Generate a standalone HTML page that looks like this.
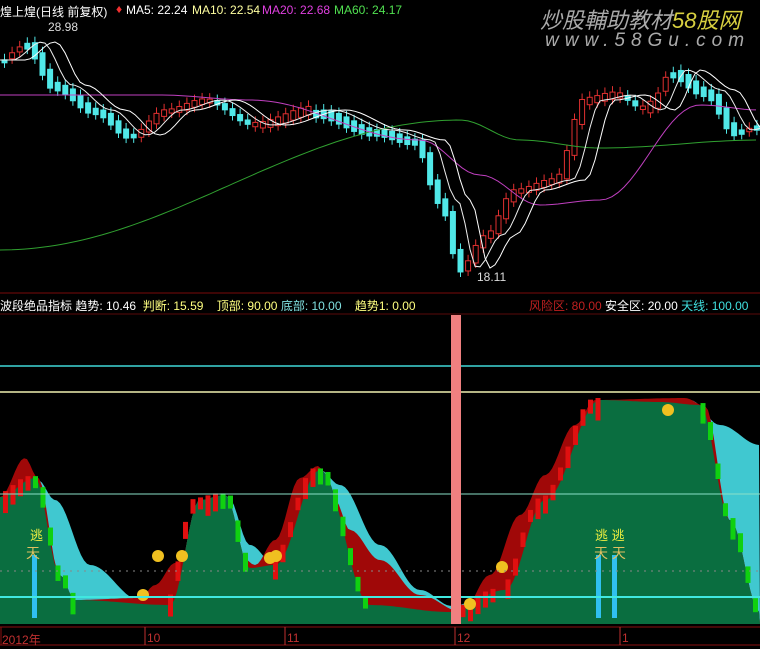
<!DOCTYPE html><html><head><meta charset="utf-8"><style>
body{margin:0;background:#000;width:760px;height:649px;overflow:hidden;font-family:"Liberation Sans","Noto Sans CJK SC",sans-serif}
svg{position:absolute;left:0;top:0}
.t{position:absolute;font-size:12px;white-space:nowrap}
</style></head><body>
<svg id="s" width="760" height="649" xmlns="http://www.w3.org/2000/svg">
<line x1="0" y1="293" x2="760" y2="293" stroke="#7a0a0a"/>
<line x1="0" y1="314" x2="760" y2="314" stroke="#5a0a0a"/>
<line x1="0" y1="366" x2="760" y2="366" stroke="#40d8d8" stroke-width="1.5"/>
<line x1="0" y1="392" x2="760" y2="392" stroke="#f0f0b0" stroke-width="1.5"/>
<g id="low"></g>
<line x1="0" y1="494" x2="760" y2="494" stroke="#8ae0c8" stroke-width="1"/>
<line x1="0" y1="571" x2="760" y2="571" stroke="#888" stroke-dasharray="2 5"/>
<line x1="0" y1="597" x2="760" y2="597" stroke="#40e8e0" stroke-width="2"/>
<rect x="451" y="315" width="10" height="309" fill="#f08080"/>
<line x1="0" y1="627" x2="760" y2="627" stroke="#8a1010"/>
<line x1="0" y1="645" x2="760" y2="645" stroke="#8a1010"/>
<line x1="1" y1="627" x2="1" y2="645" stroke="#8a1010"/>
<g stroke="#c03030"><line x1="145" y1="627" x2="145" y2="645"/><line x1="285" y1="627" x2="285" y2="645"/><line x1="455" y1="627" x2="455" y2="645"/><line x1="620" y1="627" x2="620" y2="645"/></g>
<g id="upper"></g>
</svg>
<div class="t" style="left:0;top:3px;color:#fff">煌上煌(日线 前复权)</div>
<div class="t" style="left:116px;top:2px;color:#f03030">♦</div>
<div class="t" style="left:126px;top:3px;color:#fff">MA5: 22.24</div>
<div class="t" style="left:192px;top:3px;color:#ffffa0">MA10: 22.54</div>
<div class="t" style="left:262px;top:3px;color:#e040e0">MA20: 22.68</div>
<div class="t" style="left:334px;top:3px;color:#50e050">MA60: 24.17</div>
<div class="t" style="left:48px;top:20px;color:#ddd">28.98</div>
<div class="t" style="left:477px;top:270px;color:#ddd">18.11</div>
<div class="t" style="left:540px;top:3px;color:#aaa;font-size:22px;font-style:italic">炒股輔助教材<span style="color:#d8d040">58股网</span></div>
<div class="t" style="left:545px;top:30px;color:#aaa;font-size:19px;font-style:italic;letter-spacing:6px">www.58Gu.com</div>
<div class="t" style="left:0;top:297px;color:#fff">波段绝品指标 <span>趋势: 10.46</span>&nbsp; <span style="color:#ffff80">判断: 15.59</span>&nbsp;&nbsp;&nbsp; <span style="color:#ffff80">顶部: 90.00</span> <span style="color:#80e0e0">底部: 10.00</span>&nbsp;&nbsp;&nbsp; <span style="color:#ffff80">趋势1: 0.00</span></div>
<div class="t" style="left:529px;top:297px;color:#c02020">风险区: 80.00 <span style="color:#fff">安全区: 20.00</span> <span style="color:#40e0e0">天线: 100.00</span></div>
<div class="t" style="left:2px;top:631px;color:#c03030">2012年</div>
<div class="t" style="left:147px;top:631px;color:#c03030">10</div>
<div class="t" style="left:287px;top:631px;color:#c03030">11</div>
<div class="t" style="left:457px;top:631px;color:#c03030">12</div>
<div class="t" style="left:622px;top:631px;color:#c03030">1</div>
<div class="t" style="left:30px;top:525px;color:#f0f040;font-size:13px">逃</div>
<div class="t" style="left:595px;top:525px;color:#f0f040;font-size:13px">逃 逃</div>
<div class="t" style="left:594px;top:543px;color:#e0c060;font-size:14px">天 天</div>
<div class="t" style="left:26px;top:543px;color:#e0c060;font-size:14px">天</div>
<script>
var NS="http://www.w3.org/2000/svg";
function el(p,t,a){var e=document.createElementNS(NS,t);for(var k in a)e.setAttribute(k,a[k]);p.appendChild(e);return e;}
function interp(pts,x){if(x<=pts[0][0])return pts[0][1];for(var i=0;i<pts.length-1;i++){if(x>=pts[i][0]&&x<=pts[i+1][0]){var f=(x-pts[i][0])/(pts[i+1][0]-pts[i][0]);f=(1-Math.cos(f*Math.PI))/2;return pts[i][1]+(pts[i+1][1]-pts[i][1])*f;}}return pts[pts.length-1][1];}
function pathF(fn,step){var d="";for(var x=0;x<=760;x+=step){d+=(x?"L":"M")+x+","+fn(x).toFixed(1);}return d;}
function path(pts,step){return pathF(function(x){return interp(pts,x);},step);}
var low=document.getElementById("low");
var grn=[[0,497],[35,478],[60,575],[75,600],[170,605],[200,500],[225,495],[250,568],[275,565],[320,470],[370,605],[450,612],[505,590],[545,500],[600,400],[660,402],[700,405],[730,520],[760,612]];
var cyp=[[0,497],[38,480],[55,500],[90,565],[140,600],[170,605],[200,500],[228,497],[250,545],[275,565],[320,470],[340,485],[380,545],[420,590],[452,606],[500,590],[545,500],[600,400],[690,400],[720,425],[760,445]];
var rdp=[[0,497],[25,458],[38,478],[60,575],[75,600],[140,598],[155,585],[175,563],[200,545],[220,540],[240,555],[255,565],[275,540],[300,478],[318,466],[335,500],[350,530],[380,560],[420,595],[462,612],[490,575],[520,515],[545,475],[575,425],[595,400],[685,398],[705,406],[730,520],[760,612]];
function g(x){return interp(grn,x);}
function cy(x){return Math.min(g(x),interp(cyp,x));}
function rd(x){return Math.min(g(x),interp(rdp,x));}
el(low,"path",{d:pathF(cy,3)+"L760,624L0,624Z",fill:"#40c8d0"});
el(low,"path",{d:pathF(rd,3)+"L760,624L0,624Z",fill:"#a00808"});
el(low,"path",{d:path(grn,3)+"L760,624L0,624Z",fill:"#0a6e40"});
for(var x=3;x<760;x+=7.5){var y=g(x);var y2=g(x+7.5);if(Math.abs(y2-y)<1.5)continue;var up=y2<y;var h=12+((x*7)%11);
 el(low,"rect",{x:x,y:Math.min(y,y2)-2,width:5,height:Math.min(h,624-Math.min(y,y2)),fill:up?"#e01010":"#10d010"});}
[[143,595],[158,556],[182,556],[270,558],[276,556],[502,567],[470,604],[668,410]].forEach(function(p){el(low,"circle",{cx:p[0],cy:p[1],r:6,fill:"#f0c020"});});
[[34,555],[598,555],[614,555]].forEach(function(p){el(low,"rect",{x:p[0]-2,y:p[1],width:5,height:63,fill:"#30c0f0"});});
var up1=document.getElementById("upper");
var pr=[[0,60],[30,42],[60,85],[100,110],[135,135],[170,110],[210,100],[260,125],[320,110],[380,130],[420,140],[445,200],[465,268],[490,235],[520,190],[560,180],[590,100],[620,95],[650,110],[675,70],[710,90],[740,130],[760,125]];
for(var x=2;x<760;x+=7.6){var a=interp(pr,x),b=interp(pr,x+7.6)+((x*13)%9-4);var up=b<a;var t=Math.min(a,b),bt=Math.max(a,b)+3;
 var c=up?"#e03030":"#50e8e8";el(up1,"line",{x1:x+2.5,y1:t-6,x2:x+2.5,y2:bt+5,stroke:c});
 el(up1,"rect",{x:x,y:t,width:5,height:bt-t,fill:up?"#000":c,stroke:c});}
function sm(off){return pr.map(function(p){return [p[0]+off,p[1]];});}
el(up1,"path",{d:path([[0,250],[460,120],[520,140],[600,148],[760,140]],6),fill:"none",stroke:"#30a030"});
el(up1,"path",{d:path([[160,95],[250,100],[420,140],[480,175],[540,205],[600,200],[700,105],[760,110]],6),fill:"none",stroke:"#c040c0"});
el(up1,"path",{d:path(sm(25),5),fill:"none",stroke:"#fff"});
el(up1,"path",{d:path(sm(12),5),fill:"none",stroke:"#eee"});
</script>
</body></html>
